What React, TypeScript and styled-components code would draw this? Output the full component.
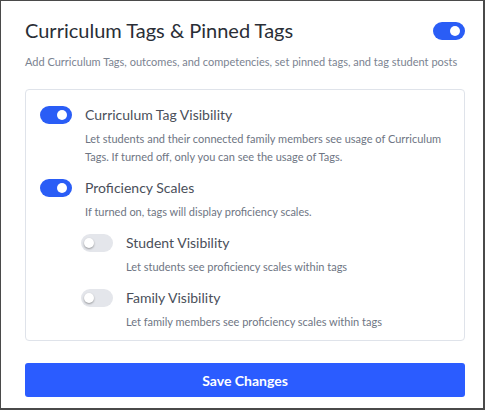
import React, { FC } from 'react';
import styled, { createGlobalStyle, css } from 'styled-components';

const GlobalStyle = createGlobalStyle`
  html, body {
    margin: 0;
    padding: 0;
    background: #ffffff;
  }
  body {
    font-family: Lato, "Open Sans", sans-serif;
  }
`;

const Page = styled.div`
  box-sizing: border-box;
  width: 485px;
  height: 410px;
  border: 1px solid #4a4a4a;
  border-right-width: 2px;
  border-bottom-width: 2px;
  padding: 18px 18px 0 24px;
  display: flex;
  flex-direction: column;
`;

const Header = styled.div`
  display: flex;
  align-items: center;
  justify-content: space-between;
  height: 24px;
`;

const Title = styled.h1`
  margin: -2px 0 0;
  font-size: 20px;
  font-weight: 400;
  color: #2a2e36;
`;

const Subtitle = styled.p`
  margin: 12px 0 0;
  font-size: 11px;
  color: #7b8391;
`;

const Card = styled.div`
  margin-top: 21px;
  border: 1px solid #dfe3ea;
  border-radius: 4px;
  padding: 16px 14px 9px;
  display: flex;
  flex-direction: column;
`;

const Setting = styled.div<{ $nested?: boolean }>`
  display: grid;
  grid-template-columns: 32px 1fr;
  column-gap: 13px;
  align-items: center;
  ${({ $nested }) => $nested && css`margin-left: 41px;`}
  & + & {
    margin-top: 13px;
  }
`;

const Label = styled.div`
  font-size: 14px;
  color: #4a4f5a;
  line-height: 18px;
`;

const Desc = styled.div`
  grid-column: 2;
  margin-top: 6px;
  font-size: 11px;
  line-height: 18px;
  color: #6e7583;
`;

const Track = styled.span<{ $on: boolean }>`
  position: relative;
  display: inline-block;
  width: 32px;
  height: 18px;
  border-radius: 9px;
  background: ${({ $on }) => ($on ? '#2a5df6' : '#e4e6eb')};
`;

const Knob = styled.span<{ $on: boolean }>`
  position: absolute;
  top: 4px;
  width: 10px;
  height: 10px;
  border-radius: 50%;
  background: #ffffff;
  ${({ $on }) =>
    $on
      ? css`left: 17px;`
      : css`
          left: 3px;
          box-shadow: 0 1px 2px rgba(0, 0, 0, 0.35);
        `}
`;

const SaveButton = styled.button`
  margin-top: 22px;
  height: 34px;
  width: 100%;
  border: none;
  border-radius: 3px;
  background: #2b5cff;
  color: #ffffff;
  font-family: Lato, "Open Sans", sans-serif;
  font-size: 14px;
  font-weight: 700;
  cursor: pointer;
`;

const Toggle: FC<{ on: boolean }> = ({ on }) => (
  <Track $on={on}>
    <Knob $on={on} />
  </Track>
);

interface SettingRowProps {
  on: boolean;
  label: string;
  desc: React.ReactNode;
  nested?: boolean;
}

const SettingRow: FC<SettingRowProps> = ({ on, label, desc, nested }) => (
  <Setting $nested={nested}>
    <Toggle on={on} />
    <Label>{label}</Label>
    <Desc>{desc}</Desc>
  </Setting>
);

const App: FC = () => (
  <>
    <GlobalStyle />
    <Page>
      <Header>
        <Title>Curriculum Tags &amp; Pinned Tags</Title>
        <Toggle on />
      </Header>
      <Subtitle>
        Add Curriculum Tags, outcomes, and competencies, set pinned tags, and tag student posts
      </Subtitle>
      <Card>
        <SettingRow
          on
          label="Curriculum Tag Visibility"
          desc={
            <>
              Let students and their connected family members see usage of Curriculum
              <br />
              Tags. If turned off, only you can see the usage of Tags.
            </>
          }
        />
        <SettingRow
          on
          label="Proficiency Scales"
          desc="If turned on, tags will display proficiency scales."
        />
        <SettingRow
          nested
          on={false}
          label="Student Visibility"
          desc="Let students see proficiency scales within tags"
        />
        <SettingRow
          nested
          on={false}
          label="Family Visibility"
          desc="Let family members see proficiency scales within tags"
        />
      </Card>
      <SaveButton>Save Changes</SaveButton>
    </Page>
  </>
);

export default App;
